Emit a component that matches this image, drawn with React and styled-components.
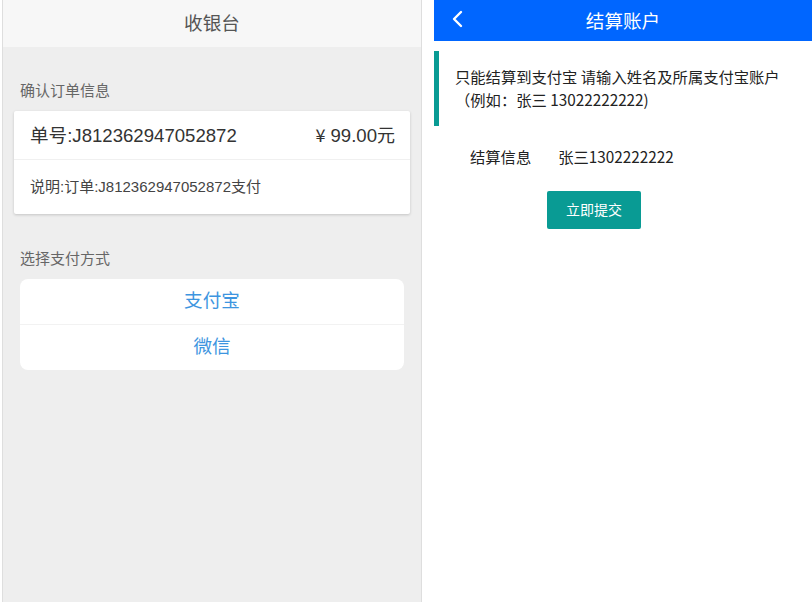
import styled, { createGlobalStyle } from "styled-components";

const GlobalStyle = createGlobalStyle`
  html, body {
    margin: 0;
    padding: 0;
    background: #fff;
  }
  body {
    font-family: "Liberation Sans", "Noto Sans CJK SC", sans-serif;
  }
`;

const Page = styled.div`
  display: flex;
  height: 602px;
  overflow: hidden;
`;

const Cashier = styled.div`
  margin-left: 2px;
  width: 418px;
  border-left: 1px solid #dedede;
  border-right: 1px solid #dedede;
  background: #eeeeee;
  display: flex;
  flex-direction: column;
`;

const CashierHeader = styled.div`
  height: 47px;
  box-sizing: border-box;
  padding-bottom: 5px;
  background: #f7f7f7;
  display: flex;
  align-items: center;
  justify-content: center;
  font-size: 18.6px;
  color: #555;
`;

const SectionLabel = styled.div`
  padding: ${(p) => p.$top || 34}px 0 0 17px;
  height: 20px;
  line-height: 20px;
  font-size: 15px;
  color: #666;
`;

const OrderCard = styled.div`
  margin: 10px 11px 0 11px;
  background: #fff;
  border-radius: 2px;
  box-shadow: 0 1px 3px rgba(0, 0, 0, 0.18);
`;

const OrderRow = styled.div`
  height: ${(p) => p.$h}px;
  box-sizing: border-box;
  padding: 0 15px 3px 16px;
  display: flex;
  align-items: center;
  justify-content: space-between;
  font-size: ${(p) => p.$size}px;
  color: ${(p) => p.$color};
  border-top: ${(p) => (p.$divided ? "1px solid #f0f0f0" : "none")};
`;

const Price = styled.span`
  font-family: "Noto Sans CJK SC", sans-serif;
  font-size: 18px;
  & i {
    font-style: normal;
    margin-right: 5px;
  }
  & b {
    font-weight: normal;
    font-family: "Liberation Sans", sans-serif;
    font-size: 18.6px;
  }
`;

const PayList = styled.div`
  margin: 10px 17px 0 17px;
  background: #fff;
  border-radius: 8px;
  overflow: hidden;
`;

const PayItem = styled.div`
  height: ${(p) => p.$h}px;
  box-sizing: border-box;
  padding-bottom: 6px;
  display: flex;
  align-items: center;
  justify-content: center;
  font-size: 18.6px;
  color: #3d95e0;
  border-top: ${(p) => (p.$divided ? "1px solid #f2f2f2" : "none")};
`;

const Settle = styled.div`
  margin-left: 12px;
  flex: 1;
  display: flex;
  flex-direction: column;
  font-family: "Noto Sans CJK SC", "Liberation Sans", sans-serif;
`;

const SettleHeader = styled.div`
  height: 41px;
  box-sizing: border-box;
  padding-bottom: 2px;
  background: #0066ff;
  display: flex;
  align-items: center;
  justify-content: center;
  position: relative;
  color: #fff;
  font-size: 18.6px;
`;

const BackIcon = styled.svg`
  position: absolute;
  left: 17px;
  top: 10px;
`;

const Notice = styled.div`
  margin-top: 10px;
  height: 75px;
  border-left: 5px solid #099b94;
  padding: 14px 0 0 16px;
  box-sizing: border-box;
  font-size: 15.3px;
  line-height: 23px;
  color: #222;
`;

const InfoRow = styled.div`
  display: flex;
  margin: 20px 0 0 36px;
  font-size: 15.3px;
  color: #222;
  line-height: 20px;
  gap: 27px;
`;

const SubmitBtn = styled.button`
  align-self: flex-start;
  margin: 25px 0 0 113px;
  width: 94px;
  height: 38px;
  padding: 0 0 2px;
  border: none;
  border-radius: 2px;
  background: #099b94;
  color: #fff;
  font-size: 14px;
  font-family: inherit;
  cursor: pointer;
`;

export default function App() {
  return (
    <>
      <GlobalStyle />
      <Page>
        <Cashier>
          <CashierHeader>收银台</CashierHeader>
          <SectionLabel>确认订单信息</SectionLabel>
          <OrderCard>
            <OrderRow $h={48} $size={18.6} $color="#333">
              <span>单号:J812362947052872</span>
              <Price>
                <i>¥</i>
                <b>99.00</b>元
              </Price>
            </OrderRow>
            <OrderRow $h={55} $size={15} $color="#444" $divided>
              <span>说明:订单:J812362947052872支付</span>
            </OrderRow>
          </OrderCard>
          <SectionLabel $top={35}>选择支付方式</SectionLabel>
          <PayList>
            <PayItem $h={45}>支付宝</PayItem>
            <PayItem $h={46} $divided>微信</PayItem>
          </PayList>
        </Cashier>
        <Settle>
          <SettleHeader>
            <BackIcon width="12" height="18" viewBox="0 0 12 18" fill="none">
              <path d="M10 2L3 9l7 7" stroke="#fff" strokeWidth="2.4" strokeLinecap="round" strokeLinejoin="round" />
            </BackIcon>
            结算账户
          </SettleHeader>
          <Notice>
            只能结算到支付宝 请输入姓名及所属支付宝账户
            <br />
            （例如：张三 13022222222)
          </Notice>
          <InfoRow>
            <span>结算信息</span>
            <span>张三1302222222</span>
          </InfoRow>
          <SubmitBtn>立即提交</SubmitBtn>
        </Settle>
      </Page>
    </>
  );
}
